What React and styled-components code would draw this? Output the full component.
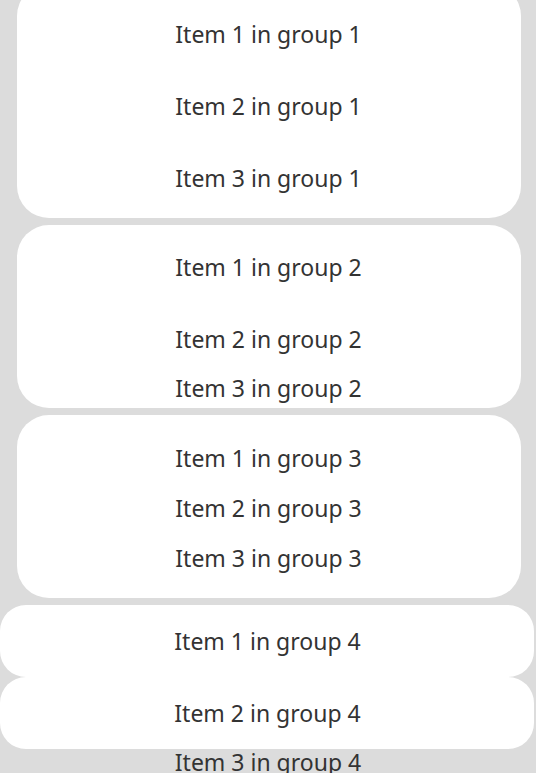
import React from "react";
import styled, { createGlobalStyle } from "styled-components";

const GlobalStyle = createGlobalStyle`
  html, body {
    margin: 0;
    padding: 0;
    background: #dcdcdc;
    overflow: hidden;
  }
  body {
    font-family: "Noto Sans", "Open Sans", sans-serif;
  }
`;

const Page = styled.div`
  display: flex;
  flex-direction: column;
  gap: 7px;
  height: 773px;
  overflow: hidden;
`;

const Group = styled.div`
  display: flex;
  flex-direction: column;
  margin-top: ${(p) => p.$shift || 0}px;
`;

const Card = styled.div`
  display: flex;
  flex-direction: column;
  background: #ffffff;
  border-radius: ${(p) => p.$radius || 32}px;
  margin: ${(p) => (p.$wide ? "0 2px 0 0" : "0 15px 0 17px")};
  padding: ${(p) => p.$padTop || 0}px 0 ${(p) => p.$padBottom || 0}px;
`;

const Item = styled.div`
  height: ${(p) => p.$h}px;
  line-height: ${(p) => p.$h}px;
  text-align: center;
  font-size: 23px;
  color: #333333;
  white-space: nowrap;
  margin-left: ${(p) => (p.$wide ? 1 : -1)}px;
`;

const Loose = styled(Item)`
  margin-left: 0;
`;

const App = () => {
  return (
    <>
      <GlobalStyle />
      <Page>
        <Group $shift={-16}>
          <Card $padTop={14} $padBottom={4}>
            <Item $h={72}>Item 1 in group 1</Item>
            <Item $h={72}>Item 2 in group 1</Item>
            <Item $h={72}>Item 3 in group 1</Item>
          </Card>
        </Group>
        <Card $padTop={6} $padBottom={7}>
          <Item $h={72}>Item 1 in group 2</Item>
          <Item $h={72}>Item 2 in group 2</Item>
          <Item $h={26}>Item 3 in group 2</Item>
        </Card>
        <Card $padTop={18} $padBottom={15}>
          <Item $h={50}>Item 1 in group 3</Item>
          <Item $h={50}>Item 2 in group 3</Item>
          <Item $h={50}>Item 3 in group 3</Item>
        </Card>
        <Group>
          <Card $wide $radius={26}>
            <Item $wide $h={72}>Item 1 in group 4</Item>
          </Card>
          <Card $wide $radius={26}>
            <Item $wide $h={72}>Item 2 in group 4</Item>
          </Card>
          <Loose $h={26}>Item 3 in group 4</Loose>
        </Group>
      </Page>
    </>
  );
};

export default App;
